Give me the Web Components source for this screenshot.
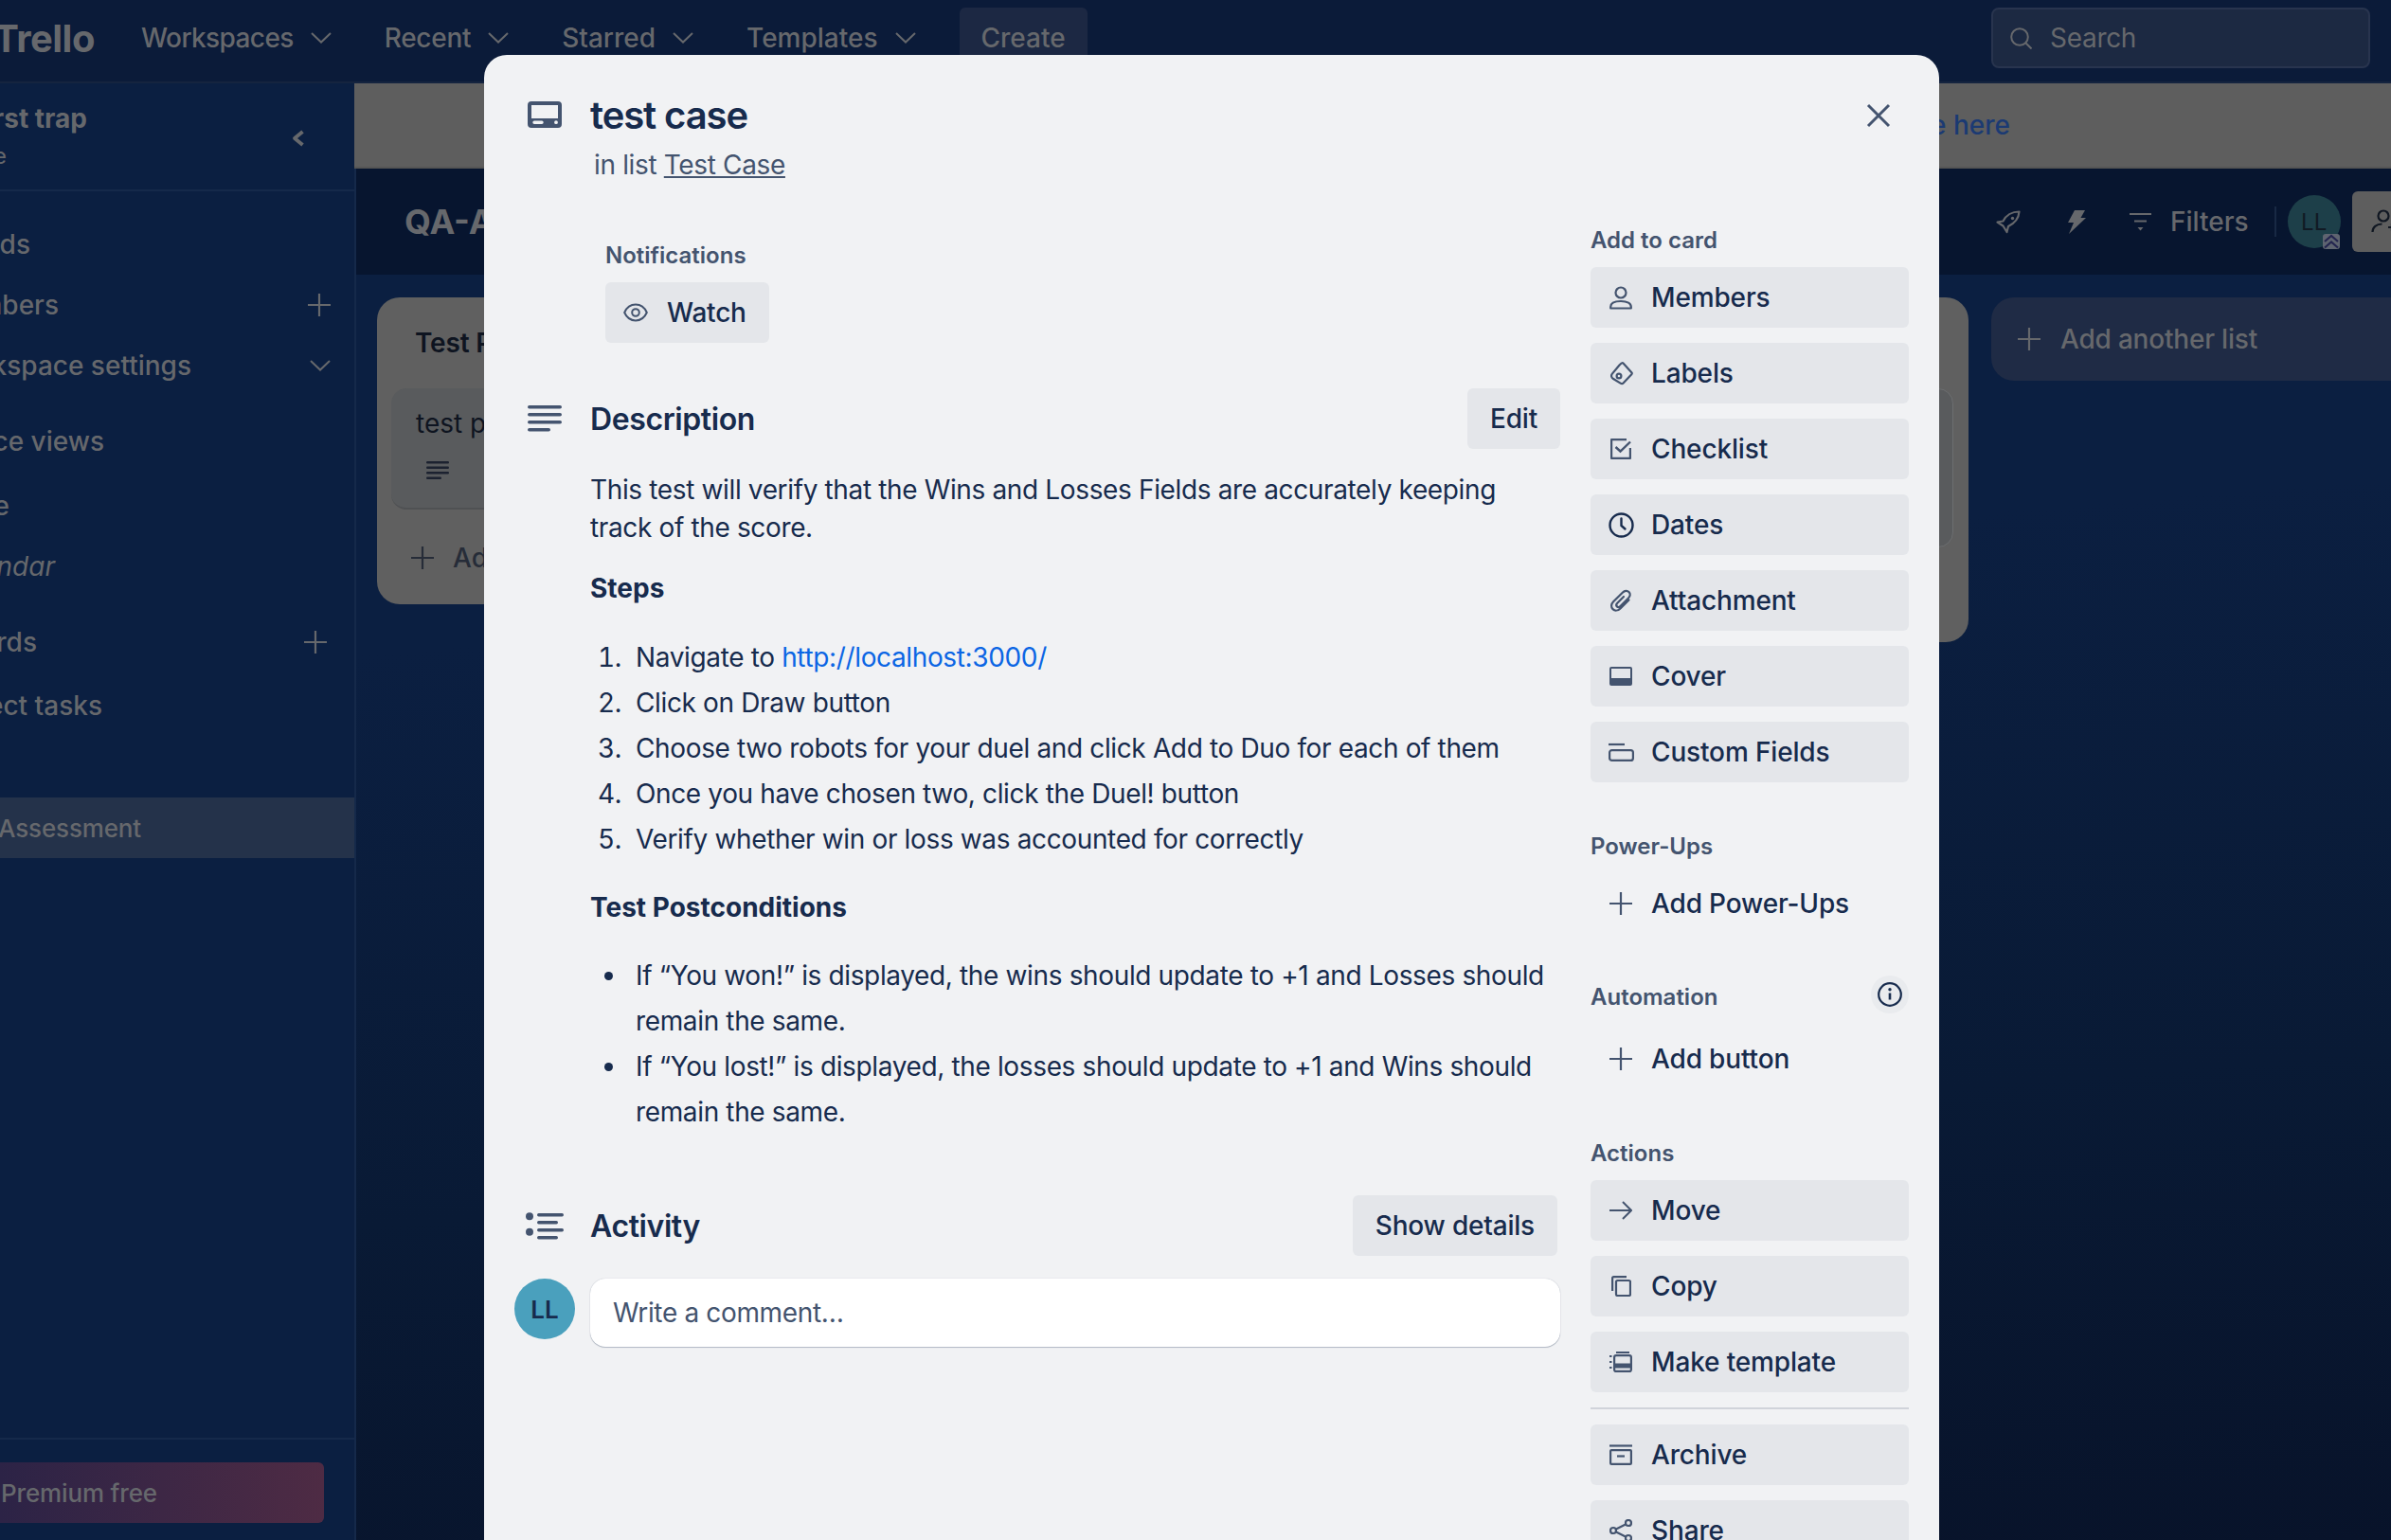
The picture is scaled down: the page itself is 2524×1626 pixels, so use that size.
<!DOCTYPE html>
<html lang="en">
<head>
<meta charset="utf-8">
<title>test case</title>
<style>
  html, body { margin: 0; height: 100%; }
  body {
    width: 2524px;
    height: 1626px;
    overflow: hidden;
    position: relative;
    display: flex;
    flex-direction: column;
    background: #0b1f41;
    font-family: Inter, "Liberation Sans", sans-serif;
  }
  .below-nav { display: flex; flex: 1; min-height: 0; }
</style>
</head>
<body>
  <top-nav></top-nav>
  <div class="below-nav">
    <side-bar></side-bar>
    <board-view></board-view>
  </div>
  <card-modal>
    <card-details slot="main"></card-details>
    <card-actions slot="side"></card-actions>
  </card-modal>

<script>
/**
 * Icon drawings, each one is [width, height, markup].
 */
const ICONS = {
  card: [36, 28, '<path fill="currentColor" fill-rule="evenodd" d="M4 0h28a4 4 0 014 4v20a4 4 0 01-4 4H4a4 4 0 01-4-4V4a4 4 0 014-4zM4 4v14h28V4zM7 20.5a1.7 1.7 0 000 3.4h8a1.7 1.7 0 000-3.4zM30 20.3a1.9 1.9 0 100 3.8 1.9 1.9 0 000-3.8z"/>'],
  lines: [36, 28, '<g fill="currentColor"><rect width="36" height="3.6" rx="1.8"/><rect y="8" width="36" height="3.6" rx="1.8"/><rect y="16" width="36" height="3.6" rx="1.8"/><rect y="24" width="24" height="3.6" rx="1.8"/></g>'],
  smalllines: [24, 19, '<g fill="currentColor"><rect width="24" height="2.400" rx="1.200"/><rect y="5.500" width="24" height="2.400" rx="1.200"/><rect y="11" width="24" height="2.400" rx="1.200"/><rect y="16.500" width="16" height="2.400" rx="1.200"/></g>'],
  activity: [40, 29, '<g fill="currentColor"><circle cx="4" cy="4.3" r="4"/><circle cx="4" cy="20.7" r="4"/><rect x="12" y="1" width="28" height="3.4" rx="1.7"/><rect x="12" y="9" width="22" height="3.4" rx="1.7"/><rect x="12" y="17" width="28" height="3.4" rx="1.7"/><rect x="12" y="25" width="22" height="3.4" rx="1.7"/></g>'],
  eye: [26, 20, '<g fill="none" stroke="currentColor" stroke-width="2"><path d="M1.2 10C3.5 4.8 8 1.6 13 1.6S22.500 4.800 24.800 10C22.500 15.200 18 18.400 13 18.400S3.500 15.200 1.200 10z"/><circle cx="13" cy="10" r="3.800"/></g>'],
  person: [24, 25, '<g fill="none" stroke="currentColor" stroke-width="2.200"><circle cx="12" cy="7" r="5.500"/><path d="M1.200 23.500v-1.500c0-3.600 3.800-6 10.800-6s10.800 2.400 10.800 6v1.500z" stroke-linejoin="round"/></g>'],
  label: [25, 25, '<g fill="none" stroke="currentColor" stroke-width="2.200"><path d="M14.500 1.500L23.300 11.300a1.500 1.500 0 010 2L14.800 22.300a2.500 2.500 0 01-3.200.4L3.700 17.800a3.500 3.500 0 01-.8-5.200L10.500 3.500c1.200-1.300 2.900-3 4-2z" stroke-linejoin="round"/><circle cx="10" cy="15" r="2.400"/></g>'],
  check: [22, 22, '<g fill="none" stroke="currentColor" stroke-width="2.400"><path d="M21 10v10a1 1 0 01-1 1H2a1 1 0 01-1-1V2a1 1 0 011-1h15"/><path d="M5.500 9l5 4.500L21 3.500"/></g>'],
  clock: [27, 27, '<g fill="none" stroke="currentColor" stroke-width="2.400"><circle cx="13.500" cy="13.500" r="12"/><path d="M13.500 6.500v7.500l4 3.500" stroke-linecap="round"/></g>'],
  clip: [24, 24, '<path fill="none" stroke="currentColor" stroke-width="2.200" stroke-linecap="round" d="M20.500 11.500l-9 9c-2.600 2.600-6 2.600-8 .6s-2-5.200.6-7.800L14 3.500c2-2 4.700-2.300 6.500-.5s1.500 4.500-.5 6.500l-8.500 8.500c-1.200 1.200-2.700 1.300-3.600.4s-.8-2.400.4-3.600L15 8"/>'],
  cover: [24, 20, '<path fill="currentColor" fill-rule="evenodd" d="M2 0h20a2 2 0 012 2v16a2 2 0 01-2 2H2a2 2 0 01-2-2V2a2 2 0 012-2zM2 2v10h20V2z"/>'],
  fields: [27, 20, '<g fill="none" stroke="currentColor" stroke-width="2.200"><path d="M0 2h17"/><rect x="1.100" y="8.100" width="24.800" height="10.800" rx="2.500"/></g>'],
  plus: [24, 24, '<path fill="none" stroke="currentColor" stroke-width="2.200" d="M12 0v24M0 12h24"/>'],
  arrow: [24, 22, '<path fill="none" stroke="currentColor" stroke-width="2" d="M0 11h23M14 2l9 9-9 9"/>'],
  copy: [21, 22, '<g fill="none" stroke="currentColor" stroke-width="2.200"><rect x="5" y="5" width="15" height="16" rx="1.500"/><path d="M1.100 16V2.500a1.400 1.400 0 011.400-1.400H16"/></g>'],
  template: [24, 22, '<g fill="none" stroke="currentColor" stroke-width="2.200"><rect x="5.100" y="4.100" width="17.800" height="16.800" rx="2"/><path d="M0 5h2.500M0 11h2.500M0 17h2.500M7 1h14"/><path d="M6 15h16" stroke-width="5"/></g>'],
  archive: [24, 22, '<g fill="none" stroke="currentColor" stroke-width="2.200"><path d="M0 1.500h24"/><rect x="1.100" y="6.100" width="21.800" height="14.800" rx="1"/><path d="M8 12.500h8"/></g>'],
  share: [24, 24, '<g fill="none" stroke="currentColor" stroke-width="2.200"><circle cx="4" cy="12" r="3"/><circle cx="20" cy="4" r="3"/><circle cx="20" cy="20" r="3"/><path d="M7 10.500L17 5.500M7 13.500L17 18.500"/></g>'],
  info: [26, 26, '<g fill="none" stroke="currentColor" stroke-width="2.200"><circle cx="13" cy="13" r="11.800"/><path d="M13 11.500v7" stroke-width="2.600"/></g><circle cx="13" cy="7.800" r="1.700" fill="currentColor"/>'],
  close: [26, 26, '<path fill="none" stroke="currentColor" stroke-width="3" d="M2 2l22 22M24 2L2 24"/>'],
  search: [23, 23, '<g fill="none" stroke="currentColor" stroke-width="2"><circle cx="10" cy="10" r="8.800"/><path d="M16.500 16.500L22.500 22.500"/></g>'],
  chevron: [22, 12, '<path fill="none" stroke="currentColor" stroke-width="2" d="M1 1l10 9.500L21 1"/>'],
  back: [13, 18, '<path fill="none" stroke="currentColor" stroke-width="3.800" stroke-linejoin="round" d="M11.500 2L3 9l8.500 7"/>'],
  rocket: [26, 25, '<g fill="none" stroke="currentColor" stroke-width="2.200" stroke-linejoin="round"><path d="M24.500 1.500C17 1.500 10.500 5.500 7.500 11.500L1.500 12.500l6 4 4 6.500 1.500-6c6-3 11-8 11.500-15.500z"/></g><circle cx="17.500" cy="8.500" r="1.700" fill="currentColor"/>'],
  bolt: [19, 25, '<path fill="currentColor" d="M7 0h11l-4.500 8H19L1 25l5-12H0z"/>'],
  filter: [23, 20, '<path fill="none" stroke="currentColor" stroke-width="2" d="M0 2h23M5 9.500h13"/><path fill="currentColor" d="M8.500 16h6l-3 3.500z"/>'],
  addperson: [26, 26, '<g fill="none" stroke="currentColor" stroke-width="2.200"><circle cx="13" cy="7" r="5.500"/><path d="M1.500 24c0-5 4-8.500 10-8.500M18 19h8M22 15v8"/></g>'],
  ups: [18, 16, '<path fill="none" stroke="#23254f" stroke-width="2.200" d="M2 8l7-6 7 6M2 14.500l7-6 7 6"/>']
}

/**
 * Defines a custom element whose shadow root is cloned from the given markup.
 *
 * @param {string} name - The tag name of the element.
 * @param {string} html - The shadow markup, styles included.
 */
function defineShadow (name, html) {
  const template = document.createElement('template')
  template.innerHTML = html
  customElements.define(name, class extends HTMLElement {
    constructor () {
      super()
      this.attachShadow({ mode: 'open' })
      this.shadowRoot.appendChild(template.content.cloneNode(true))
    }
  })
}

/**
 * Draws one icon out of the ICONS table.
 */
customElements.define('ui-icon', class extends HTMLElement {
  constructor () {
    super()
    this.attachShadow({ mode: 'open' })
  }

  connectedCallback () {
    const [w, h, body] = ICONS[this.getAttribute('name')]
    this.shadowRoot.innerHTML = `
      <style>:host { display: inline-flex; flex: none; align-items: center; justify-content: center; }</style>
      <svg width="${w}" height="${h}" viewBox="0 0 ${w} ${h}" aria-hidden="true">${body}</svg>`
  }
})

/**
 * A sidebar row. The page is scrolled sideways, so rows are placed by where their text ends.
 */
customElements.define('side-item', class extends HTMLElement {
  constructor () {
    super()
    this.attachShadow({ mode: 'open' })
    this.shadowRoot.innerHTML = `
      <style>
        :host { display: flex; align-items: center; height: 64px; font-weight: 500; white-space: nowrap; }
        .text { display: flex; justify-content: flex-end; flex: none; }
        .trail { margin-left: auto; display: flex; }
      </style>
      <div class="text"><slot></slot></div>
      <div class="trail"><slot name="trail"></slot></div>`
  }

  connectedCallback () {
    this.shadowRoot.querySelector('.text').style.width = `${this.getAttribute('end')}px`
    this.shadowRoot.querySelector('.trail').style.marginRight = `${this.getAttribute('trail-gap') || 25}px`
  }
})

defineShadow('nav-menu', `
  <style>
    :host { display: flex; align-items: center; gap: 18px; font-size: 28px; font-weight: 500; color: #66686c; white-space: nowrap; }
  </style>
  <slot></slot>
  <ui-icon name="chevron"></ui-icon>
`)

defineShadow('top-nav', `
  <style>
    :host {
      display: flex;
      align-items: center;
      flex: none;
      box-sizing: border-box;
      height: 88px;
      padding: 0 22px 6px 0;
      background: #0b1b39;
      border-bottom: 2px solid #15243f;
      color: #66686c;
    }
    .logo { display: flex; justify-content: flex-end; width: 100px; font-size: 40px; font-weight: 700; letter-spacing: -0.5px; margin-right: 49px; white-space: nowrap; }
    .menus { display: flex; align-items: center; gap: 56px; }
    .create { display: flex; align-items: center; justify-content: center; box-sizing: border-box; width: 135px; height: 64px; margin-left: 46px; border-radius: 6px; background: #1c2843; font-size: 28px; font-weight: 500; }
    .search { display: flex; align-items: center; gap: 19px; box-sizing: border-box; width: 400px; height: 64px; margin-left: auto; padding-left: 18px; border: 2px solid #28344e; border-radius: 8px; background: #1c2942; font-size: 28px; letter-spacing: -0.3px; }
  </style>
  <div class="logo">Trello</div>
  <div class="menus">
    <nav-menu style="letter-spacing:-0.6px">Workspaces</nav-menu>
    <nav-menu style="letter-spacing:-0.3px">Recent</nav-menu>
    <nav-menu>Starred</nav-menu>
    <nav-menu>Templates</nav-menu>
  </div>
  <div class="create">Create</div>
  <div class="search"><ui-icon name="search"></ui-icon>Search</div>
`)

defineShadow('side-bar', `
  <style>
    :host {
      display: flex;
      flex-direction: column;
      flex: none;
      box-sizing: border-box;
      width: 376px;
      background: #0b1f41;
      border-right: 2px solid #15294a;
      color: #66686c;
      font-size: 28px;
      overflow: hidden;
    }
    .head { display: flex; align-items: center; flex: none; box-sizing: border-box; height: 114px; border-bottom: 2px solid #15294a; padding-top: 2px; }
    .names { flex: 1; display: flex; flex-direction: column; gap: 8px; }
    .name { display: flex; justify-content: flex-end; font-weight: 700; white-space: nowrap; line-height: 32px; width: 92px; }
    .plan { display: flex; justify-content: flex-end; font-size: 24px; line-height: 32px; width: 7px; white-space: nowrap; }
    .back { margin: 2px 53px 0 0; }
    .nav { flex: 1; padding-top: 24px; }
    .gap { margin-top: 16px; }
    .table { margin-top: 4px; }
    .tasks { margin-top: 3px; }
    .active { margin-top: 65px; background: #24324a; font-size: 26px; letter-spacing: -0.15px; }
    .foot { flex: none; box-sizing: border-box; height: 108px; padding-top: 24px; border-top: 2px solid #15294a; }
    .premium { display: flex; align-items: center; justify-content: flex-end; box-sizing: border-box; width: 342px; height: 64px; border-radius: 0 6px 6px 0; padding-right: 176px; background: linear-gradient(90deg, #2c2346, #4e2b44); font-size: 26px; font-weight: 500; letter-spacing: -0.15px; white-space: nowrap; }
    em { font-style: italic; font-weight: 400; }
  </style>
  <div class="head">
    <div class="names">
      <div class="name">First trap</div>
      <div class="plan">Free</div>
    </div>
    <ui-icon class="back" name="back"></ui-icon>
  </div>
  <div class="nav">
    <side-item end="32">Boards</side-item>
    <side-item end="62">Members<ui-icon slot="trail" name="plus"></ui-icon></side-item>
    <side-item end="202">Workspace settings<ui-icon slot="trail" name="chevron"></ui-icon></side-item>
    <side-item class="gap" end="110">Workspace views</side-item>
    <side-item class="table" end="10">Table</side-item>
    <side-item end="58"><em>Calendar</em></side-item>
    <side-item class="gap" end="39" trail-gap="29">Your boards<ui-icon slot="trail" name="plus"></ui-icon></side-item>
    <side-item class="tasks" end="108">Project tasks</side-item>
    <side-item class="active" end="149">QA-Assessment</side-item>
  </div>
  <div class="foot"><div class="premium">Try Premium free</div></div>
`)

defineShadow('board-list', `
  <style>
    :host { display: block; flex: none; box-sizing: border-box; width: 544px; border-radius: 24px; background: #606060; color: #0e1420; font-size: 28px; }
  </style>
  <slot></slot>
`)

defineShadow('board-view', `
  <style>
    :host { display: flex; flex-direction: column; flex: 1; min-width: 0; background: linear-gradient(175deg, #0b1f41 35%, #091a35 70%, #08132a); color: #66686c; }
    .banner { display: flex; align-items: center; justify-content: flex-end; flex: none; box-sizing: border-box; height: 90px; margin-left: -2px; padding-right: 402px; background: #5e5e5e; border-bottom: 2px solid #555; color: #1b3a73; font-size: 28px; font-weight: 500; white-space: nowrap; position: relative; }
    .head { display: flex; align-items: center; flex: none; height: 112px; box-sizing: border-box; padding-left: 51px; background: #07152f; }
    h1 { flex: 1; margin: 0; font-size: 36px; font-weight: 700; white-space: nowrap; }
    .tools { display: flex; align-items: center; flex: none; box-sizing: border-box; width: 417px; overflow: hidden; }
    .bolt { margin-left: 50px; }
    .filter { margin-left: 46px; }
    .filters { margin-left: 20px; font-size: 28px; font-weight: 500; }
    .sep { flex: none; width: 2px; height: 32px; margin-left: 27px; background: #182944; }
    .avatar { display: flex; align-items: center; justify-content: center; flex: none; position: relative; width: 56px; height: 56px; margin-left: 12px; border-radius: 50%; background: #1d3f49; color: #111a24; font-size: 24px; font-weight: 400; }
    .avatar ui-icon { position: absolute; right: 1px; bottom: -1px; width: 18px; height: 16px; background: #5e6470; border-radius: 3px; }
    .share { display: flex; align-items: center; flex: none; box-sizing: border-box; width: 100px; height: 64px; margin-left: 12px; padding-left: 20px; border-radius: 6px; background: #5e5e5e; color: #101722; }
    .lists { display: flex; align-items: flex-start; gap: 24px; flex: 1; padding: 24px 0 0 22px; min-height: 0; }
    .list-head { height: 96px; box-sizing: border-box; padding: 32px 0 0 40px; line-height: 32px; font-weight: 600; letter-spacing: -0.2px; white-space: nowrap; }
    .card { box-sizing: border-box; width: 512px; height: 128px; margin-left: 15px; padding: 21px 0 0 26px; border-radius: 16px; background: #595b5d; border-bottom: 2px solid #4f5153; line-height: 32px; white-space: nowrap; }
    .card ui-icon { display: flex; width: 24px; margin: 24px 0 0 11px; color: #1c2230; }
    .add { display: flex; align-items: center; gap: 20px; height: 102px; padding-left: 36px; color: #262c38; font-weight: 500; }
    .first { height: 324px; }
    .second { height: 364px; }
    .third { height: 364px; padding-top: 96px; }
    .third .card { margin-left: 16px; height: 168px; border: 1px solid #6c6e70; }
    .more { display: flex; align-items: center; gap: 21px; flex: none; box-sizing: border-box; width: 500px; height: 88px; padding-left: 28px; border-radius: 24px 0 0 24px; background: #1f2b45; font-size: 28px; font-weight: 500; letter-spacing: -0.2px; white-space: nowrap; }
  </style>
  <div class="banner">Upgrade here</div>
  <div class="head">
    <h1>QA-Assessment</h1>
    <div class="tools">
      <ui-icon name="rocket"></ui-icon>
      <ui-icon class="bolt" name="bolt"></ui-icon>
      <ui-icon class="filter" name="filter"></ui-icon>
      <span class="filters">Filters</span>
      <div class="sep"></div>
      <div class="avatar">LL<ui-icon name="ups"></ui-icon></div>
      <div class="share"><ui-icon name="addperson"></ui-icon></div>
    </div>
  </div>
  <div class="lists">
    <board-list class="first">
      <div class="list-head">Test Plan</div>
      <div class="card">test plan<ui-icon name="smalllines"></ui-icon></div>
      <div class="add"><ui-icon name="plus"></ui-icon>Add a card</div>
    </board-list>
    <board-list class="second"></board-list>
    <board-list class="third"><div class="card"></div></board-list>
    <div class="more"><ui-icon name="plus"></ui-icon>Add another list</div>
  </div>
`)

defineShadow('card-modal', `
  <style>
    :host { position: absolute; left: 511px; top: 58px; display: flex; gap: 32px; box-sizing: border-box; width: 1536px; height: 1620px; padding: 0 32px; border-radius: 24px; background: #f1f2f4; color: #172b4d; font-size: 28px; overflow: hidden; }
    .close { position: absolute; left: 1459px; top: 51px; color: #44546f; }
    ::slotted([slot="main"]) { width: 1104px; flex: none; }
    ::slotted([slot="side"]) { width: 336px; flex: none; }
  </style>
  <slot name="main"></slot>
  <slot name="side"></slot>
  <ui-icon class="close" name="close"></ui-icon>
`)

defineShadow('section-head', `
  <style>
    :host { display: flex; align-items: center; color: #172b4d; }
    .icon { display: flex; justify-content: center; flex: none; width: 64px; margin-right: 16px; color: #44546f; }
    .title { flex: 1; font-size: 32px; font-weight: 600; letter-spacing: -0.4px; }
  </style>
  <div class="icon"><slot name="icon"></slot></div>
  <div class="title"><slot></slot></div>
  <slot name="end"></slot>
`)

defineShadow('plain-button', `
  <style>
    :host { display: inline-flex; align-items: center; box-sizing: border-box; height: 64px; padding: 0 24px; border-radius: 6px; background: #e4e6ea; color: #172b4d; font-size: 28px; font-weight: 500; letter-spacing: -0.2px; white-space: nowrap; }
  </style>
  <slot></slot>
`)

defineShadow('card-details', `
  <style>
    :host { display: block; }
    .title-row { height: 92px; padding-top: 40px; box-sizing: border-box; display: flex; align-items: flex-start; }
    .title-row .icon { display: flex; justify-content: center; width: 64px; margin: 9px 16px 0 0; color: #44546f; }
    .title { font-size: 40px; line-height: 48px; font-weight: 600; letter-spacing: -1.1px; }
    .sub { margin-left: 84px; line-height: 40px; margin-top: 4px; color: #44546f; letter-spacing: -0.35px; }
    .sub a { color: inherit; }
    .notify { margin: 60px 0 0 96px; }
    .label { font-size: 24px; font-weight: 600; line-height: 32px; color: #44546f; margin-bottom: 12px; }
    .watch { padding: 0 24px 0 19px; gap: 20px; }
    .watch ui-icon { color: #44546f; }
    .desc-head { margin-top: 48px; }
    .desc { margin: 23px 0 0 80px; line-height: 40px; letter-spacing: -0.36px; }
    p { margin: 0; }
    h4 { margin: 0; font-size: 28px; font-weight: 700; line-height: 40px; letter-spacing: 0; }
    .steps { margin-top: 24px; }
    ol, ul { margin: 0; padding: 0 0 0 40px; line-height: 48px; }
    li { padding-left: 8px; }
    ol { margin-top: 29px; }
    ul { margin-top: 28px; }
    .post { margin-top: 28px; }
    a.url { color: #0c66e4; text-decoration: none; }
    .activity { margin-top: 64px; }
    .activity plain-button { margin-right: 3px; }
    .comment { display: flex; gap: 16px; margin-top: 24px; }
    .avatar { display: flex; align-items: center; justify-content: center; flex: none; width: 64px; height: 64px; border-radius: 50%; background: #4aa0bd; color: #172b4d; font-size: 26px; font-weight: 600; }
    .input { flex: 1; display: flex; align-items: center; box-sizing: border-box; height: 72px; padding-left: 24px; border-radius: 16px; background: #fff; color: #44546f; letter-spacing: -0.35px; box-shadow: 0 1px 1px rgba(9, 30, 66, .25), 0 0 1px rgba(9, 30, 66, .31); }
  </style>
  <div class="title-row">
    <div class="icon"><ui-icon name="card"></ui-icon></div>
    <div class="title">test case</div>
  </div>
  <div class="sub">in list <a href="#">Test Case</a></div>
  <div class="notify">
    <div class="label">Notifications</div>
    <plain-button class="watch"><ui-icon name="eye"></ui-icon>Watch</plain-button>
  </div>
  <section-head class="desc-head">
    <ui-icon slot="icon" name="lines"></ui-icon>
    Description
    <plain-button slot="end">Edit</plain-button>
  </section-head>
  <div class="desc">
    <p>This test will verify that the Wins and Losses Fields are accurately keeping track of the score.</p>
    <h4 class="steps">Steps</h4>
    <ol>
      <li>Navigate to <a class="url" href="#">http://localhost:3000/</a></li>
      <li>Click on Draw button</li>
      <li>Choose two robots for your duel and click Add to Duo for each of them</li>
      <li>Once you have chosen two, click the Duel! button</li>
      <li>Verify whether win or loss was accounted for correctly</li>
    </ol>
    <h4 class="post">Test Postconditions</h4>
    <ul>
      <li>If “You won!” is displayed, the wins should update to +1 and Losses should remain the same.</li>
      <li>If “You lost!” is displayed, the losses should update to +1 and Wins should remain the same.</li>
    </ul>
  </div>
  <section-head class="activity">
    <ui-icon slot="icon" name="activity"></ui-icon>
    Activity
    <plain-button slot="end">Show details</plain-button>
  </section-head>
  <div class="comment">
    <div class="avatar">LL</div>
    <div class="input">Write a comment…</div>
  </div>
`)

defineShadow('action-button', `
  <style>
    :host { display: flex; align-items: center; box-sizing: border-box; height: 64px; padding-left: 16px; border-radius: 6px; background: var(--action-bg, #e4e6ea); color: #172b4d; font-size: 28px; font-weight: 500; letter-spacing: -0.15px; white-space: nowrap; }
    .icon { display: flex; justify-content: center; width: 32px; margin-right: 16px; color: #44546f; }
  </style>
  <div class="icon"><slot name="icon"></slot></div>
  <slot></slot>
`)

defineShadow('card-actions', `
  <style>
    :host { display: block; padding-top: 180px; }
    .label { display: flex; align-items: center; justify-content: space-between; box-sizing: border-box; height: 32px; padding-bottom: 2px; font-size: 24px; font-weight: 600; color: #44546f; }
    .group { display: flex; flex-direction: column; gap: 16px; margin-top: 12px; }
    .flat { --action-bg: transparent; }
    .power { margin-top: 52px; }
    .auto { margin-top: 51px; }
    .auto-body { margin-top: 17px; }
    .acts { margin-top: 52px; }
    hr { margin: 0; border: 0; height: 2px; background: #d0d3da; }
    .rule { margin: 16px 0 16px; }
    .info { display: flex; align-items: center; justify-content: center; width: 40px; height: 40px; margin-top: -5px; border-radius: 50%; background: #e9ebee; color: #172b4d; }
    .clock { color: #172b4d; }
  </style>
  <div class="label">Add to card</div>
  <div class="group">
    <action-button><ui-icon slot="icon" name="person"></ui-icon>Members</action-button>
    <action-button><ui-icon slot="icon" name="label"></ui-icon>Labels</action-button>
    <action-button><ui-icon slot="icon" name="check"></ui-icon>Checklist</action-button>
    <action-button><ui-icon slot="icon" class="clock" name="clock"></ui-icon>Dates</action-button>
    <action-button><ui-icon slot="icon" name="clip"></ui-icon>Attachment</action-button>
    <action-button><ui-icon slot="icon" name="cover"></ui-icon>Cover</action-button>
    <action-button><ui-icon slot="icon" name="fields"></ui-icon>Custom Fields</action-button>
  </div>
  <div class="label power">Power-Ups</div>
  <div class="group flat">
    <action-button><ui-icon slot="icon" name="plus"></ui-icon>Add Power-Ups</action-button>
  </div>
  <div class="label auto">Automation<span class="info"><ui-icon name="info"></ui-icon></span></div>
  <div class="group flat auto-body">
    <action-button><ui-icon slot="icon" name="plus"></ui-icon>Add button</action-button>
  </div>
  <div class="label acts">Actions</div>
  <div class="group">
    <action-button><ui-icon slot="icon" name="arrow"></ui-icon>Move</action-button>
    <action-button><ui-icon slot="icon" name="copy"></ui-icon>Copy</action-button>
    <action-button><ui-icon slot="icon" name="template"></ui-icon>Make template</action-button>
  </div>
  <hr class="rule">
  <div class="group" style="margin-top:0">
    <action-button><ui-icon slot="icon" name="archive"></ui-icon>Archive</action-button>
    <action-button><ui-icon slot="icon" name="share"></ui-icon>Share</action-button>
  </div>
`)
</script>
</body>
</html>
